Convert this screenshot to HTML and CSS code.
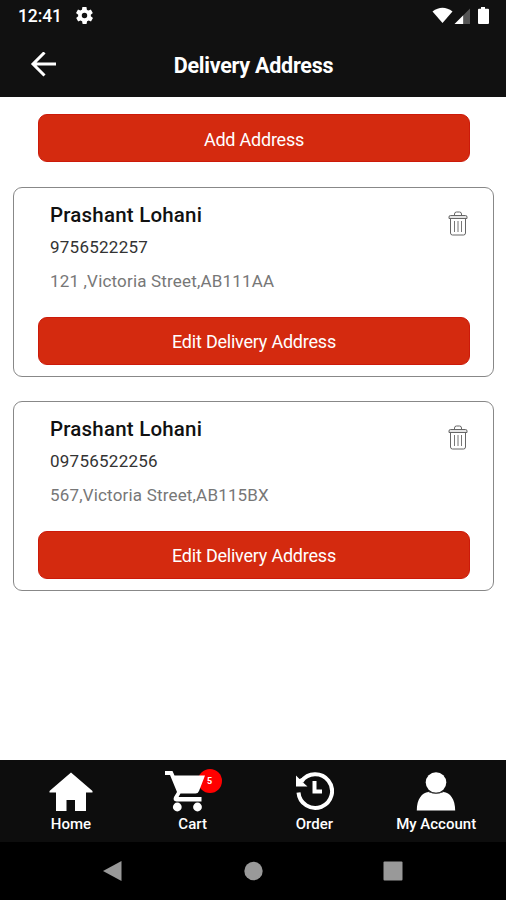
FILE: index.html
```html
<!DOCTYPE html>
<html lang="en">
  <head>
    <meta charset="UTF-8">
    <title>Delivery Address</title>
    <link rel="stylesheet" href="styles.css">
  </head>
  <body>
    <header class="header">
      <div class="status-bar">
        <span class="clock">12:41</span>
        <svg class="gear" width="17" height="17" viewBox="2 2 20 20">
          <path fill="#fff" fill-rule="evenodd" d="M19.4 13a7.5 7.5 0 0 0 0-2l2.1-1.6c.2-.2.3-.4.1-.7l-2-3.400c-.1-.2-.4-.3-.6-.2l-2.500 1a7.300 7.300 0 0 0-1.700-1l-.4-2.600c0-.3-.2-.5-.5-.5h-4c-.3 0-.5.2-.5.5l-.4 2.600c-.6.200-1.200.6-1.700 1l-2.500-1c-.2-.1-.5 0-.6.200l-2 3.400c-.1.200-.1.500.1.700L4.600 11a7.500 7.500 0 0 0 0 2l-2.100 1.600c-.2.200-.3.400-.1.700l2 3.400c.1.200.4.300.6.200l2.500-1c.5.400 1.100.8 1.700 1l.4 2.600c0 .3.200.5.500.5h4c.3 0 .5-.2.500-.5l.4-2.600c.6-.2 1.200-.6 1.700-1l2.500 1c.2.100.5 0 .6-.2l2-3.400c.1-.2.1-.5-.1-.7zM12 15.200a3.200 3.200 0 1 1 0-6.400 3.200 3.200 0 0 1 0 6.400z"/>
        </svg>
        <svg class="signals" width="58" height="18" viewBox="0 0 58 18">
          <path fill="#fff" d="M0.500 4.500Q10.500 -3 20.500 4.500L10.500 16z"/>
          <path fill="#fff" d="M22.500 17L31.500 8V17z"/>
          <path fill="#555" d="M31.500 8L38 1.500V17h-6.500z"/>
          <path fill="#fff" d="M49 0h4v1.800h3q1 0 1 1V16q0 1-1 1h-9q-1 0-1-1V2.800q0-1 1-1h2z"/>
        </svg>
      </div>
      <div class="toolbar">
        <svg class="back" width="27" height="26" viewBox="0 0 27 26">
          <path fill="none" stroke="#fff" stroke-width="3" d="M26 12H3M14.500 .5L3 12l11.500 11.500"/>
        </svg>
        <h1 class="title">Delivery Address</h1>
      </div>
    </header>

    <main class="content">
      <button type="button" class="button">Add Address</button>

      <section class="card">
        <div class="card-info">
          <div>
            <h2 class="name">Prashant Lohani</h2>
            <p class="phone">9756522257</p>
            <p class="address">121 ,Victoria Street,AB111AA</p>
          </div>
          <svg class="trash" width="20" height="25" viewBox="0 0 20 25">
            <path fill="#e4e4e4" d="M1 4.500h18v3H1z"/>
            <path fill="none" stroke="#666" d="M6.500 4.500V3q0-2 2-2h3q2 0 2 2v1.500M1 7.500V6q0-1.500 1.500-1.500h15Q19 4.500 19 6v1.500zM2.500 7.500V22q0 2 2 2h11q2 0 2-2V7.500"/>
            <path fill="none" stroke="#777" d="M6.500 10v11M10 10v11M13.500 10v11"/>
          </svg>
        </div>
        <button type="button" class="button">Edit Delivery Address</button>
      </section>

      <section class="card">
        <div class="card-info">
          <div>
            <h2 class="name">Prashant Lohani</h2>
            <p class="phone">09756522256</p>
            <p class="address">567,Victoria Street,AB115BX</p>
          </div>
          <svg class="trash" width="20" height="25" viewBox="0 0 20 25">
            <path fill="#e4e4e4" d="M1 4.500h18v3H1z"/>
            <path fill="none" stroke="#666" d="M6.500 4.500V3q0-2 2-2h3q2 0 2 2v1.500M1 7.500V6q0-1.500 1.500-1.500h15Q19 4.500 19 6v1.500zM2.500 7.500V22q0 2 2 2h11q2 0 2-2V7.500"/>
            <path fill="none" stroke="#777" d="M6.500 10v11M10 10v11M13.500 10v11"/>
          </svg>
        </div>
        <button type="button" class="button">Edit Delivery Address</button>
      </section>
    </main>

    <nav class="tabs">
      <div class="tab">
        <svg width="44" height="40" viewBox="0 0 44 40">
          <path fill="#fff" d="M22 .5L43.500 19v1.500h-6.500V39H26V28h-8.500v11H7V20.500H.5V19z"/>
        </svg>
        <span>Home</span>
      </div>
      <div class="tab">
        <div class="cart">
          <span class="badge">5</span>
          <svg class="cart-icon" width="40" height="42" viewBox="0 0 40 42">
            <path fill="#fff" d="M0 1h7.500L9.500 5.500H40L34 21q-1 2.500-3.500 2.500H15.500L13.500 27H36.500v4.500H11.500Q7.500 31 9 27l3-5L5 5H0z"/>
            <circle cx="12.300" cy="37" r="4.400" fill="#fff"/>
            <circle cx="32.500" cy="37" r="4.400" fill="#fff"/>
          </svg>
        </div>
        <span>Cart</span>
      </div>
      <div class="tab">
        <svg width="40" height="40" viewBox="0 0 40 40">
          <path fill="none" stroke="#fff" stroke-width="4" d="M7.500 9.500A16.800 16.800 0 1 1 4.500 20.500"/>
          <path fill="#fff" d="M2 3.500L5.500 7 9 5.500 8.500 10l5 4.500H2zM18.500 9h4v8.500H28v4h-9.500z"/>
        </svg>
        <span>Order</span>
      </div>
      <div class="tab">
        <svg width="40" height="40" viewBox="0 0 40 40">
          <path fill="#fff" d="M.8 38.500C.8 27 6 20.500 12.500 20q7.500 3.500 15 0C34 20.500 39.200 27 39.200 38.500z"/>
          <circle cx="20" cy="10.500" r="10.300" fill="#fff"/>
          <path fill="none" stroke="#555" stroke-width=".7" d="M12.500 19.500q7.500 3.500 15 0"/>
        </svg>
        <span>My Account</span>
      </div>
    </nav>

    <footer class="system-nav">
      <svg width="20" height="22" viewBox="0 0 20 22"><path fill="#999" d="M18.500 1v20L0 11z"/></svg>
      <svg width="20" height="20" viewBox="0 0 20 20"><circle cx="10.500" cy="10" r="9.200" fill="#999"/></svg>
      <svg width="20" height="20" viewBox="0 0 20 20"><rect x=".5" y=".5" width="19" height="19" rx="1" fill="#999"/></svg>
    </footer>
  </body>
</html>
```
FILE: styles.css
```css
* {
  box-sizing: border-box;
}
body {
  display: flex;
  flex-direction: column;
  height: 900px;
  margin: 0;
  background-color: #fff;
  color: #111;
  font-family: Roboto, sans-serif;
}
svg {
  display: block;
  flex-shrink: 0;
}
h1, h2, p {
  margin: 0;
}
.header {
  height: 97px;
  background-color: #111;
  color: #fff;
}
.status-bar {
  display: flex;
  height: 32px;
  padding: 7px 16px 0 18px;
}
.clock {
  width: 58px;
  font-size: 17.5px;
  font-weight: 500;
  line-height: 18px;
  letter-spacing: -0.1px;
}
.signals {
  margin-left: auto;
}
.toolbar {
  display: grid;
  grid-template-columns: 60px 1fr 60px;
  align-items: center;
  height: 65px;
}
.back {
  margin-left: 30px;
}
.title {
  padding: 2px 0 0 1px;
  text-align: center;
  font-size: 21.5px;
  font-weight: 700;
  letter-spacing: -0.25px;
}
.content {
  flex: 1;
  padding: 17px 12px 0 13px;
}
.button {
  display: block;
  width: 432px;
  height: 48px;
  margin: 0 auto;
  padding: 2px 0 0 1px;
  border: 1px solid #cc1a0a;
  border-radius: 9px;
  background-color: #d42a0f;
  color: #fff;
  font-family: inherit;
  font-size: 18px;
  letter-spacing: -0.22px;
}
.card {
  height: 190px;
  margin-top: 25px;
  padding: 14px 0 0;
  border: 1px solid #888;
  border-radius: 9px;
}
.card + .card {
  margin-top: 24px;
}
.card .button {
  padding-top: 1px;
}
.card-info {
  display: flex;
  justify-content: space-between;
  height: 115px;
  padding: 0 25px 0 36px;
}
.name {
  font-size: 20.5px;
  font-weight: 500;
  line-height: 26px;
  letter-spacing: 0.2px;
}
.phone {
  margin-top: 7px;
  color: #333;
  font-size: 17px;
  line-height: 24px;
  letter-spacing: 0.25px;
}
.address {
  margin-top: 10px;
  color: #777;
  font-size: 17px;
  line-height: 24px;
  letter-spacing: 0.18px;
}
.trash {
  margin-top: 9px;
}
.tabs {
  display: grid;
  grid-template-columns: repeat(4, 1fr);
  height: 82px;
  padding: 12px 9px 0 10px;
  background-color: #0d0d0d;
  color: #fff;
}
.tab {
  display: flex;
  flex-direction: column;
  align-items: center;
  font-size: 15px;
  font-weight: 500;
}
.tab > span {
  margin-top: 3px;
  line-height: 18px;
}
.cart {
  position: relative;
  width: 56px;
  height: 40px;
}
.cart-icon {
  position: absolute;
  top: -2px;
  left: 0;
}
/* the cart covers the left edge of the badge */
.badge {
  position: absolute;
  top: -3px;
  left: 33px;
  width: 24px;
  height: 24px;
  border-radius: 50%;
  background-color: #f00;
  font-size: 9px;
  font-weight: 700;
  line-height: 25px;
  text-align: center;
}
.system-nav {
  display: flex;
  align-items: center;
  justify-content: space-between;
  height: 58px;
  padding: 0 103px;
  background-color: #000;
}
```
